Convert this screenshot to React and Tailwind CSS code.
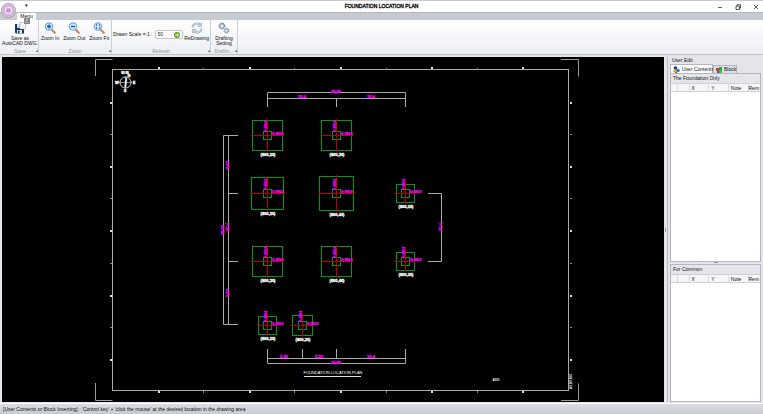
import React from "react";

const foundations = [
  { x: 265, y: 78, half: 15, name: "(800,20)" },
  { x: 334, y: 78, half: 15, name: "(800,20)" },
  { x: 265, y: 136, half: 16, name: "(800,20)" },
  { x: 334, y: 136, half: 17, name: "(800,40)" },
  { x: 403, y: 136, half: 9, name: "(800,20)" },
  { x: 265, y: 204, half: 15, name: "(800,20)" },
  { x: 334, y: 204, half: 15, name: "(800,40)" },
  { x: 403, y: 204, half: 9, name: "(800,30)" },
  { x: 265, y: 268, half: 9, name: "(800,20)" },
  { x: 300, y: 268, half: 10, name: "(800,20)" },
];

const dimensions = [
  { x: 334, y: 36, text: "20.80" },
  { x: 300, y: 41, text: "10.4" },
  { x: 369, y: 41, text: "10.4" },
  { x: 282, y: 301, text: "5.20" },
  { x: 317, y: 301, text: "5.20" },
  { x: 369, y: 301, text: "10.4" },
  { x: 334, y: 307, text: "20.80" },
  { x: 227, y: 108, text: "8.65", vertical: true },
  { x: 227, y: 170, text: "10.4", vertical: true },
  { x: 227, y: 236, text: "9.50", vertical: true },
  { x: 222, y: 173, text: "28.55", vertical: true },
  { x: 440, y: 170, text: "10.4", vertical: true },
];

const columnTicks = [156, 201, 247, 292, 338, 384, 429, 475, 520];
const rowTicks = [45, 77, 109, 141, 173, 206, 238, 270, 302];

function Foundation({ x, y, half, name }) {
  return (
    <g>
      <g fill="none" stroke="#009a0c">
        <rect x={x - half + 0.5} y={y - half + 0.5} width={half * 2} height={half * 2} />
        <rect x={x - 3.5} y={y - 3.5} width="8" height="8" />
      </g>
      <path
        d={`M${x - half - 1} ${y + 0.5}h${half * 2 + 3}M${x + 0.5} ${y - half - 1}v${half * 2 + 3}`}
        stroke="#b40000"
      />
      <g fill="#f000f0" stroke="#f000f0" strokeWidth=".3" fontSize="3" fontWeight="bold">
        <text x={x + 5} y={y}>X: 800.0</text>
        <text transform={`translate(${x} ${y - 3}) rotate(-90)`}>Y: 800.0</text>
      </g>
      <text
        x={x + 1} y={y + half + 6} fill="#fff" stroke="#fff" strokeWidth=".3"
        fontSize="4" fontWeight="bold" textAnchor="middle"
      >
        {name}
      </text>
    </g>
  );
}

function Drawing() {
  return (
    <svg viewBox="0 0 662 345" className="w-full h-full" aria-label="Foundation location plan" fontFamily="Liberation Sans, sans-serif">
      {/* Sheet corners */}
      <path
        d="M93.5 19v-16.5h17M559 2.5h17.5v17M93.5 326v17.5h17M559 343.500h17.5v-17"
        fill="none" stroke="#999"
      />
      {/* Sheet frame and grid marks */}
      <rect x="110.5" y="12.5" width="456" height="321" fill="none" stroke="#aaa" />
      {columnTicks.map((x, i) => (
        <g key={x} fill={i % 2 ? "#888" : "#ddd"}>
          <rect x={x} y={i % 2 ? 11 : 10} width={i % 2 ? 1 : 2} height="2" />
          <rect x={x} y="334" width={i % 2 ? 1 : 2} height="2" />
        </g>
      ))}
      {rowTicks.map((y, i) => (
        <g key={y} fill={i % 2 ? "#888" : "#ddd"}>
          <rect x="108" y={y} width="2" height={i % 2 ? 1 : 2} />
          <rect x="568" y={y} width="2" height={i % 2 ? 1 : 2} />
        </g>
      ))}

      {/* Compass */}
      <g stroke="#ddd" fill="none">
        <circle cx="123.5" cy="25.5" r="5.5" />
        <path d="M117 25.5h13M123.5 19v14" strokeWidth=".6" />
        <path d="M122.5 30l1.5-10 1 2-1 8z" fill="#fff" strokeWidth=".5" />
      </g>
      <g fill="#fff" stroke="#fff" strokeWidth=".3" fontSize="4" fontWeight="bold" textAnchor="middle">
        <text x="115" y="27">W</text>
        <text x="132" y="27">E</text>
        <text x="123" y="35">S</text>
        <text x="127" y="20">N</text>
        <text x="123" y="17" fontSize="3">00 00</text>
      </g>

      {/* Dimension lines */}
      <g fill="none" stroke="#aaa">
        <path d="M265.5 50v-14.5h138v14.5M265 41.5h138M334.5 41v9" />
        <path d="M236 78.5h-14.5v189h14.5M226.5 78v190M227 136.5h9M227 204.5h9" />
        <path d="M426 136.5h13.5v68h-13.5" />
        <path d="M265.5 292v14.5h138v-14.5M265 301.5h138M300.5 292v9M334.5 292v9" />
      </g>
      <g fill="#f000f0" stroke="#f000f0" strokeWidth=".3" fontSize="4" fontWeight="bold" textAnchor="middle">
        {dimensions.map((d, i) => (
          <text key={i} transform={`translate(${d.x} ${d.y}) rotate(${d.vertical ? -90 : 0})`}>
            {d.text}
          </text>
        ))}
      </g>

      {foundations.map((f, i) => (
        <Foundation key={i} {...f} />
      ))}

      {/* Plan title and stamp */}
      <text x="331" y="317" fill="#fff" fontSize="4" textAnchor="middle">FOUNDATION LOCATION PLAN</text>
      <path d="M302 319.5h57" stroke="#ddd" />
      <text x="494" y="324" fill="#fff" fontSize="3" fontWeight="bold" textAnchor="middle">A001</text>
      <text transform="translate(570 332) rotate(-90)" fill="#fff" fontSize="3" fontWeight="bold">A3 2019/01</text>
    </svg>
  );
}

function SaveIcon() {
  return (
    <svg viewBox="0 0 12 12" className="size-3">
      <path d="M1 2h9v9.5H2L1 10.5z" fill="#173a5e" />
      <rect x="3" y="8" width="5" height="3.5" fill="#e8eef5" />
      <rect x="4" y="8.5" width="1.5" height="3" fill="#173a5e" />
      <path d="M3 2h4v4H3z" fill="#cfdcea" />
      <path d="M6 .5h4l1.5 1.5v5H6z" fill="#fff" stroke="#7d94b0" strokeWidth=".5" />
    </svg>
  );
}

function ZoomIcon({ sign }) {
  return (
    <svg viewBox="0 0 12 12" className="size-3">
      <path d="M7.5 7.5l3.3 3.3" stroke="#c58a4a" strokeWidth="2" strokeLinecap="round" />
      <circle cx="5" cy="4.5" r="3.700" fill="#cce5fb" stroke="#7fa9da" strokeWidth="1.2" />
      <path d={sign} stroke="#174fb0" strokeWidth="1.3" fill="none" />
    </svg>
  );
}

function RefreshIcon() {
  return (
    <svg viewBox="0 0 12 12" className="size-3" fill="none" stroke="#8ca4c4">
      <path d="M1.5 5.5a4.5 4.5 0 0 1 8-2.3M10.5 6.5a4.5 4.5 0 0 1-8 2.3" strokeWidth="2" />
      <path d="M1.5 5.5a4.5 4.5 0 0 1 8-2.3M10.5 6.5a4.5 4.5 0 0 1-8 2.3" stroke="#e2ebf5" strokeWidth=".8" />
      <path d="M10.5 1v3.5H7zM1.5 11V7.5H5z" fill="#dce7f4" strokeWidth=".7" />
    </svg>
  );
}

function GearsIcon() {
  return (
    <svg viewBox="0 0 12 12" className="size-3" fill="none" stroke="#8294ac">
      <circle cx="4" cy="4" r="2.8" strokeWidth="1.5" strokeDasharray="1.5 .7" />
      <circle cx="4" cy="4" r="2" fill="#e8eef6" strokeWidth=".8" />
      <circle cx="8.5" cy="8.7" r="2.2" strokeWidth="1.4" strokeDasharray="1.2 .6" />
      <circle cx="8.5" cy="8.7" r="1.5" fill="#e8eef6" strokeWidth=".7" />
    </svg>
  );
}

function RibbonGroup({ label, className, children }) {
  return (
    <section className={`flex flex-col border-r border-[#cdced6] ${className}`}>
      <div className="flex flex-1 items-start justify-around pt-0.5">{children}</div>
      <div className="relative h-[6px] text-center leading-[6px] text-[#8f9199]">
        {label}
        <span className="absolute right-0 bottom-0.5 size-0.5 border-r border-b border-[#777]" />
      </div>
    </section>
  );
}

function RibbonButton({ icon, children }) {
  return (
    <button className="flex flex-col items-center whitespace-nowrap leading-[5px]">
      {icon}
      <span className="mt-0.5">{children}</span>
    </button>
  );
}

function PointTable({ title, className }) {
  return (
    <section className={`flex flex-col border border-[#b4b6c0] bg-white overflow-hidden ${className}`}>
      <h2 className="h-[9px] shrink-0 bg-[#e4e5eb] pl-0.5 leading-[8px]">{title}</h2>
      <table className="w-full table-fixed border-collapse bg-[#f5f5f8]">
        <thead>
          <tr className="h-2 border-y border-[#cfd0d7] text-left leading-[6px]">
            <th className="w-[6px] border-r border-[#d8d9df]" />
            <th className="w-3 border-r border-[#d8d9df]" />
            <th className="border-r border-[#d8d9df] pl-0.5 font-normal">X</th>
            <th className="border-r border-[#d8d9df] pl-0.5 font-normal">Y</th>
            <th className="border-r border-[#d8d9df] pl-0.5 font-normal">Note</th>
            <th className="w-3 font-normal">Rem</th>
          </tr>
        </thead>
      </table>
    </section>
  );
}

function App() {
  return (
    <div className="relative flex h-screen flex-col overflow-hidden border-t border-[#c9c9cd] bg-[#e4e5eb] font-['Liberation_Sans',sans-serif] text-[5px] text-[#111]">
      {/* Title bar */}
      <header className="relative flex h-[11px] shrink-0 items-center justify-center bg-white">
        <span className="absolute left-[25px] top-0 leading-[8px] text-black">▾</span>
        <h1 className="text-black [-webkit-text-stroke:0.3px_#000]">FOUNDATION LOCATION PLAN</h1>
        <div className="absolute right-1 top-0 flex h-full items-center gap-3">
          <button aria-label="Minimize">
            <svg viewBox="0 0 6 6" className="size-1.5"><path d="M1 3.5h4" stroke="#333" strokeWidth=".8" /></svg>
          </button>
          <button aria-label="Restore">
            <svg viewBox="0 0 6 6" className="size-1.5" fill="none" stroke="#333" strokeWidth=".8">
              <path d="M1 2h3.5v3.5H1zM2 2V.7h3.5v3.5h-1" />
            </svg>
          </button>
          <button aria-label="Close">
            <svg viewBox="0 0 6 6" className="size-1.5"><path d="M1 1l4 4M5 1l-4 4" stroke="#333" strokeWidth=".8" /></svg>
          </button>
        </div>
      </header>

      <nav className="flex h-2 shrink-0 border-t border-[#b6b7be] bg-[#c8cad1] pl-[17px]">
        <button className="w-[19px] bg-white leading-[7px]">Menu</button>
      </nav>
      <button aria-label="Application menu" className="absolute left-px top-0.5 size-[15px]">
        <svg viewBox="0 0 14 14">
          <circle cx="7" cy="7" r="6.5" fill="#d9cfe2" stroke="#9b8fa8" strokeWidth=".8" />
          <circle cx="7" cy="7" r="4.3" fill="#f6e6fa" stroke="#c79ad8" strokeWidth="1.200" />
          <path d="M5.500 5.500h3v3h-3zM5.500 7h3" fill="none" stroke="#9a62b5" strokeWidth=".7" />
        </svg>
      </button>
      <span className="absolute left-6 top-[17px] z-10 h-[6px] w-[6px] border border-[#888] bg-[#eee] text-center leading-[4px]">M</span>

      {/* Ribbon */}
      <div className="mb-0.5 flex h-[35px] shrink-0 border-b border-[#c2c3ca] bg-gradient-to-b from-white to-[#eceef3] pl-0.5">
        <RibbonGroup label="Save" className="w-[37px]">
          <RibbonButton icon={<SaveIcon />}>Save as<br />AutoCAD DWG.</RibbonButton>
        </RibbonGroup>
        <RibbonGroup label="Zoom" className="w-[73px]">
          <RibbonButton icon={<ZoomIcon sign="M3 4.500h4M5 2.500v4" />}>Zoom In</RibbonButton>
          <RibbonButton icon={<ZoomIcon sign="M3 4.500h4" />}>Zoom Out</RibbonButton>
          <RibbonButton icon={<ZoomIcon sign="M3 3h1M6 3h1M3 6h1M6 6h1" />}>Zoom Fit</RibbonButton>
        </RibbonGroup>
        <RibbonGroup label="Refresh" className="w-[99px]">
          <div className="flex items-center gap-0.5 pt-2">
            <label htmlFor="scale" className="whitespace-nowrap">Drawn Scale = 1 :</label>
            <div className="flex h-[9px] w-7 items-center justify-between rounded-xs border border-[#c3c5ce] bg-white px-0.5">
              <input id="scale" defaultValue="50" className="w-3 outline-none" />
              <button aria-label="Apply scale">
                <svg viewBox="0 0 6 6" className="size-1.5">
                  <circle cx="3" cy="3" r="3" fill="#639d16" />
                  <path d="M1 3h3M3 1.5L4.7 3 3 4.5" fill="none" stroke="#fff" />
                </svg>
              </button>
            </div>
          </div>
          <RibbonButton icon={<RefreshIcon />}>ReDrawing</RibbonButton>
        </RibbonGroup>
        <RibbonGroup label="Draftin..." className="w-[27px]">
          <RibbonButton icon={<GearsIcon />}>Drafting<br />Setting</RibbonButton>
        </RibbonGroup>
      </div>

      {/* Workspace */}
      <div className="flex min-h-0 flex-1 pl-0.5">
        <main className="min-w-0 flex-1 bg-black">
          <Drawing />
        </main>
        <div className="flex w-1 items-center justify-center border-r border-[#b9bac3]">
          <span className="h-1 w-px bg-[#999]" />
        </div>
        <aside className="flex w-[95px] flex-col pl-0.5 pr-0.5">
          <div className="h-[7px] pl-0.5 leading-[6px]">User Edit</div>
          <div className="flex h-[9px] items-end leading-[7px]">
            <button className="flex h-[9px] w-[43px] items-center gap-0.5 whitespace-nowrap border border-b-0 border-[#b4b6c0] bg-white pl-0.5">
              <svg viewBox="0 0 7 7" className="size-[7px] shrink-0">
                <circle cx="2.5" cy="2" r="1.8" fill="#243f70" />
                <path d="M0 6c0-3 4-3 4 0z" fill="#e0a21a" />
                <circle cx="5" cy="4.5" r="1.8" fill="#2b80ca" />
                <path d="M2 6h2v1H2z" fill="#c93a20" />
              </svg>
              User Contents
            </button>
            <button className="flex h-2 w-6 items-center gap-0.5 border border-b-0 border-[#b4b6c0] bg-[#dddee5] pl-0.5">
              <svg viewBox="0 0 6 6" className="size-1.5 shrink-0">
                <path d="M0 1h3v3H0z" fill="#e33124" />
                <path d="M3 0h3v3H3z" fill="#2fa83a" />
                <path d="M1 4h2v2H1z" fill="#2a65d8" />
                <path d="M3 3h3v3H3z" fill="#36c04a" />
              </svg>
              Block
            </button>
          </div>
          <PointTable title="The Foundation Only" className="flex-58" />
          <div className="flex h-0.5 justify-center"><span className="h-px w-1 bg-[#999]" /></div>
          <PointTable title="For Common" className="flex-42" />
        </aside>
      </div>

      <footer className="mt-px h-[11px] shrink-0 border-t border-white bg-gradient-to-b from-[#dcdde3] to-[#c8cad2] pl-[3px] leading-[10px]">
        [User Contents or Block Inserting] : 'Control key' + 'click the mouse' at the desired location in the drawing area
      </footer>
    </div>
  );
}

export default App;
